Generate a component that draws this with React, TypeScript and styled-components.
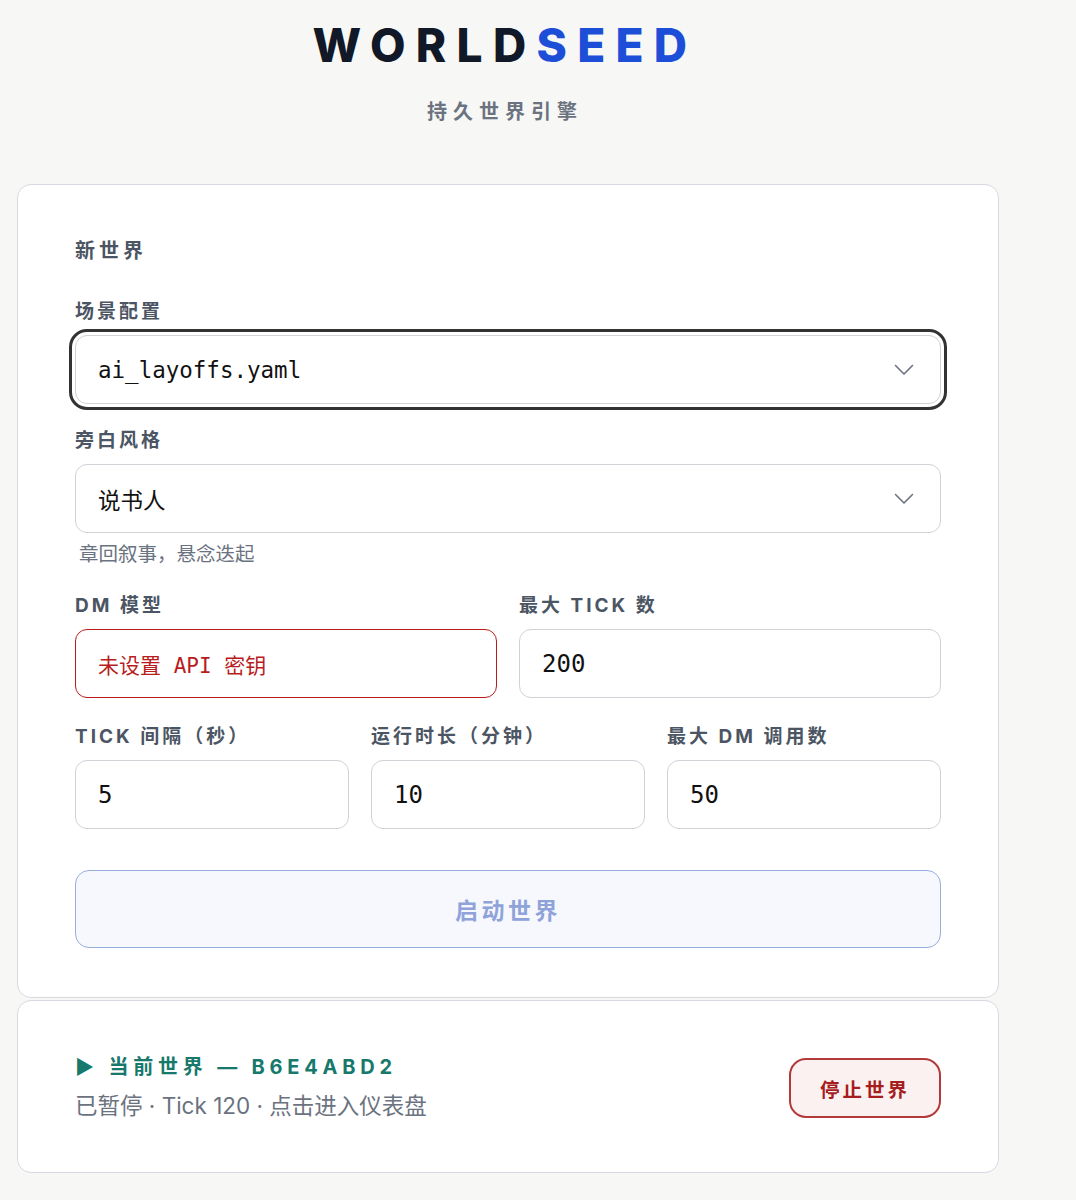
import React from 'react';
import styled, { createGlobalStyle } from 'styled-components';

const GlobalStyle = createGlobalStyle`
  html, body {
    margin: 0;
    padding: 0;
    background: #f7f7f5;
  }
  body {
    font-family: Inter, "Noto Sans CJK SC", sans-serif;
    color: #111827;
  }
`;

const CJK = `Inter, "Noto Sans CJK SC", sans-serif`;
const MONO = `"DejaVu Sans Mono", "Noto Sans CJK SC", monospace`;

const Page = styled.div`
  width: 982px;
  margin-left: 17px;
  padding-bottom: 26px;
`;

const Header = styled.header`
  display: flex;
  flex-direction: column;
  align-items: center;
  padding-top: 16px;
  padding-right: 6px;
  height: 184px;
  box-sizing: border-box;
`;

const Logo = styled.h1`
  margin: 0;
  font-family: Inter, sans-serif;
  font-weight: 800;
  font-size: 46px;
  line-height: 58px;
  letter-spacing: 10.3px;
  color: #111827;
`;

const LogoAccent = styled.span`
  color: #1d4ed8;
`;

const Tagline = styled.p`
  margin: 22px 0 0;
  font-family: ${CJK};
  font-weight: 600;
  font-size: 20px;
  letter-spacing: 6px;
  color: #6b7280;
`;

const Card = styled.section<{ $compact?: boolean }>`
  background: #fff;
  border: 1px solid #d6dae0;
  border-radius: 14px;
  padding: ${(p) => (p.$compact ? '52px 57px 51px' : '55px 57px 49px')};
  box-sizing: border-box;
  & + & {
    margin-top: 2px;
  }
`;

const SectionTitle = styled.h2`
  margin: 0 0 39px;
  font-family: ${CJK};
  font-weight: 700;
  font-size: 20px;
  line-height: 22px;
  letter-spacing: 4px;
  color: #4b5563;
`;

const Field = styled.div<{ $gap?: number }>`
  display: flex;
  flex-direction: column;
  margin-bottom: ${(p) => p.$gap ?? 27}px;
`;

const Label = styled.label`
  font-family: ${CJK};
  font-weight: 700;
  font-size: 19px;
  line-height: 22px;
  letter-spacing: 3px;
  color: #4b5563;
  margin-bottom: 12px;
`;

const Control = styled.div<{ $focused?: boolean; $error?: boolean; $size?: number }>`
  display: flex;
  align-items: center;
  justify-content: space-between;
  height: 69px;
  box-sizing: border-box;
  padding: 0 26px 0 22px;
  background: #fff;
  border: 1px solid ${(p) => (p.$error ? '#b91c1c' : '#cfd2d6')};
  border-radius: 12px;
  font-family: ${MONO};
  font-size: ${(p) => p.$size ?? 22.5}px;
  color: ${(p) => (p.$error ? '#b91c1c' : '#111')};
  outline: ${(p) => (p.$focused ? '3px solid #333' : 'none')};
  outline-offset: 3px;
`;

const PlainText = styled.span`
  font-family: ${CJK};
  font-size: 22.5px;
  color: #111;
`;

const Hint = styled.div`
  margin-top: 9px;
  padding-left: 4px;
  font-family: ${CJK};
  font-size: 19.5px;
  line-height: 24px;
  color: #6b7280;
`;

const Row = styled.div<{ $cols: number }>`
  display: grid;
  grid-template-columns: repeat(${(p) => p.$cols}, 1fr);
  column-gap: 22px;
`;

const LaunchButton = styled.button`
  display: block;
  width: 100%;
  height: 78px;
  margin-top: 14px;
  background: #f6f8fd;
  border: 1.5px solid #97acdf;
  border-radius: 14px;
  font-family: ${CJK};
  font-weight: 700;
  font-size: 23px;
  letter-spacing: 3.5px;
  color: #8fa3da;
`;

const WorldRow = styled.div`
  display: flex;
  align-items: center;
  justify-content: space-between;
`;

const WorldInfo = styled.div`
  display: flex;
  flex-direction: column;
  gap: 10px;
`;

const WorldTitle = styled.div`
  font-family: ${CJK};
  font-weight: 700;
  font-size: 20px;
  line-height: 28px;
  letter-spacing: 4.8px;
  color: #16796b;
`;

const WorldMeta = styled.div`
  font-family: ${CJK};
  font-size: 22.5px;
  line-height: 30px;
  color: #6b7280;
`;

const StopButton = styled.button`
  width: 152px;
  height: 60px;
  margin-top: 2px;
  background: #fcf1f1;
  border: 2px solid #b33a3a;
  border-radius: 17px;
  font-family: ${CJK};
  font-weight: 700;
  font-size: 19.5px;
  letter-spacing: 3px;
  color: #a61d1d;
`;

function Chevron() {
  return (
    <svg width="20" height="12" viewBox="0 0 20 12" fill="none">
      <path d="M1.5 1.5 L10 10 L18.5 1.5" stroke="#6b7280" strokeWidth="1.6" strokeLinecap="round" strokeLinejoin="round" />
    </svg>
  );
}

function App() {
  return (
    <>
      <GlobalStyle />
      <Page>
        <Header>
          <Logo>
            WORLD<LogoAccent>SEED</LogoAccent>
          </Logo>
          <Tagline>持久世界引擎</Tagline>
        </Header>

        <Card>
          <SectionTitle>新世界</SectionTitle>

          <Field $gap={26}>
            <Label>场景配置</Label>
            <Control $focused>
              <span>ai_layoffs.yaml</span>
              <Chevron />
            </Control>
          </Field>

          <Field $gap={29}>
            <Label>旁白风格</Label>
            <Control>
              <PlainText>说书人</PlainText>
              <Chevron />
            </Control>
            <Hint>章回叙事，悬念迭起</Hint>
          </Field>

          <Row $cols={2}>
            <Field $gap={28}>
              <Label>DM 模型</Label>
              <Control $error $size={21}>未设置 API 密钥</Control>
            </Field>
            <Field $gap={28}>
              <Label>最大 TICK 数</Label>
              <Control $size={24}>200</Control>
            </Field>
          </Row>

          <Row $cols={3}>
            <Field $gap={27}>
              <Label>TICK 间隔（秒）</Label>
              <Control $size={24}>5</Control>
            </Field>
            <Field $gap={27}>
              <Label>运行时长（分钟）</Label>
              <Control $size={24}>10</Control>
            </Field>
            <Field $gap={27}>
              <Label>最大 DM 调用数</Label>
              <Control $size={24}>50</Control>
            </Field>
          </Row>

          <LaunchButton>启动世界</LaunchButton>
        </Card>

        <Card $compact>
          <WorldRow>
            <WorldInfo>
              <WorldTitle>▶ 当前世界 — B6E4ABD2</WorldTitle>
              <WorldMeta>已暂停 · Tick 120 · 点击进入仪表盘</WorldMeta>
            </WorldInfo>
            <StopButton>停止世界</StopButton>
          </WorldRow>
        </Card>
      </Page>
    </>
  );
}

export default App;
